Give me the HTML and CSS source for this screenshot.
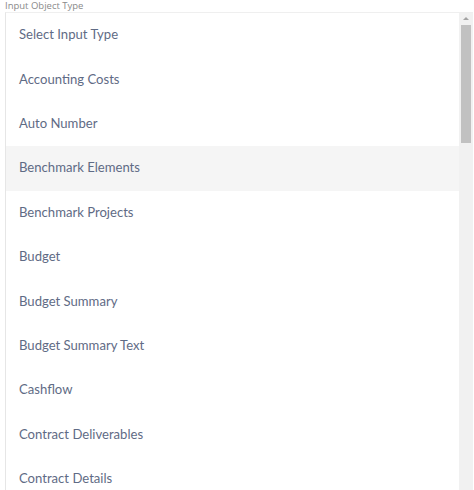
FILE: index.html
```html
<!DOCTYPE html>
<html>
<head>
<meta charset="utf-8">
<link rel="stylesheet" href="styles.css">
</head>
<body>
<div class="field">
  <div class="label">Input Object Type</div>
  <div class="dropdown">
    <ul class="options">
      <li class="option">Select Input Type</li>
      <li class="option">Accounting Costs</li>
      <li class="option">Auto Number</li>
      <li class="option hover">Benchmark Elements</li>
      <li class="option">Benchmark Projects</li>
      <li class="option">Budget</li>
      <li class="option">Budget Summary</li>
      <li class="option">Budget Summary Text</li>
      <li class="option">Cashflow</li>
      <li class="option">Contract Deliverables</li>
      <li class="option">Contract Details</li>
    </ul>
    <div class="scrollbar">
      <div class="arrow"></div>
      <div class="thumb"></div>
    </div>
  </div>
</div>
</body>
</html>
```

FILE: styles.css
```css
html, body {
  margin: 0;
  padding: 0;
  background: #ffffff;
  overflow: hidden;
}
.field {
  width: 474px;
  height: 490px;
  display: flex;
  flex-direction: column;
  padding-left: 5px;
  box-sizing: border-box;
}
.label {
  font-family: "Open Sans", sans-serif;
  font-size: 9.5px;
  line-height: 12px;
  height: 12px;
  color: #8a8a8a;
  margin-top: -1px;
  padding-top: 1px;
  overflow: hidden;
}
.dropdown {
  display: flex;
  width: 467px;
  flex: 1;
  border-top: 1px solid #efefef;
  border-left: 1px solid #e6e6e6;
  overflow: hidden;
}
.options {
  list-style: none;
  margin: 0;
  padding: 0;
  flex: 1;
}
.option {
  box-sizing: border-box;
  height: 44.4px;
  display: flex;
  align-items: center;
  padding-left: 13px;
  padding-bottom: 2px;
  font-family: "Lato", sans-serif;
  font-size: 13.1px;
  color: #5f6b85;
}
.option.hover {
  background: #f5f5f5;
}
.scrollbar {
  width: 14px;
  background: #f1f1f1;
  display: flex;
  flex-direction: column;
  align-items: center;
}
.arrow {
  width: 0;
  height: 0;
  margin-top: 4px;
  margin-bottom: 5px;
  border-left: 3px solid transparent;
  border-right: 3px solid transparent;
  border-bottom: 3px solid #a3a3a3;
}
.thumb {
  width: 10px;
  height: 118px;
  background: #c1c1c1;
}
```
